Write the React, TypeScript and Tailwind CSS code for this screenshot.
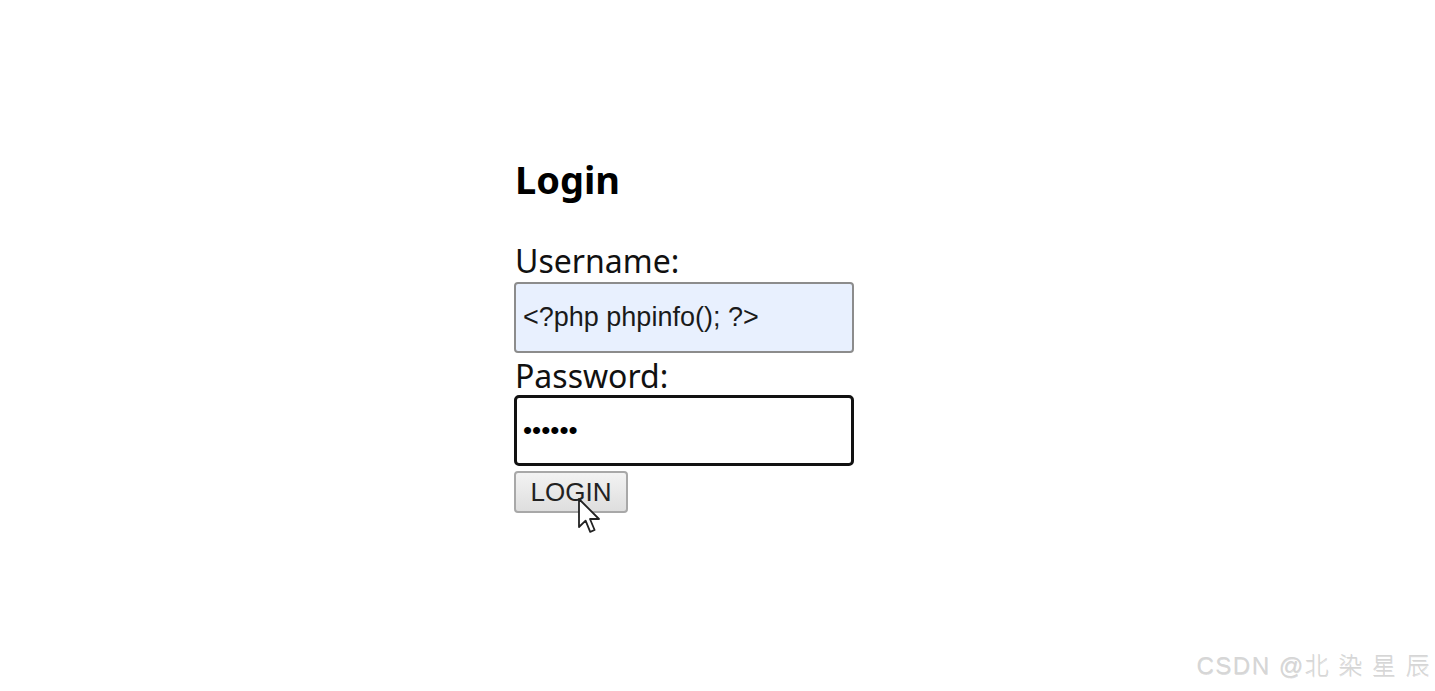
import React from "react";

export default function App() {
  return (
    <div className="relative w-[1435px] h-[691px] bg-white overflow-hidden" style={{ fontFamily: '"Noto Sans", "Open Sans", sans-serif' }}>
      <div className="flex flex-col items-start pl-[514px] pt-[156px]">
        <h1 className="text-[38px] leading-[46px] font-bold text-black pl-[1px]">Login</h1>
        <label className="mt-[41px] text-[32px] leading-[36px] text-[#111] pl-[1px]">Username:</label>
        <input
          readOnly
          value="<?php phpinfo(); ?>"
          className="mt-[3px] w-[340px] h-[71px] bg-[#e8f0fe] border-2 border-[#8c8c8c] rounded-[4px] px-[7px] text-[27px] text-[#1a1a1a] outline-none"
          style={{ fontFamily: '"Liberation Sans", Arial, sans-serif' }}
        />
        <label className="mt-[5px] text-[32px] leading-[36px] text-[#111] pl-[1px]">Password:</label>
        <input
          readOnly
          type="password"
          value="secret"
          className="mt-[1px] w-[340px] h-[71px] bg-white border-[3px] border-[#111] rounded-[5px] px-[6px] text-[26px] text-black outline-none"
          style={{ fontFamily: '"Liberation Sans", Arial, sans-serif' }}
        />
        <div className="relative mt-[5px]">
          <button
            className="w-[114px] h-[42px] border-2 border-[#a8a8a8] rounded-[4px] bg-gradient-to-b from-[#f3f3f3] to-[#dedede] text-[26px] text-[#222] leading-none"
            style={{ fontFamily: '"Liberation Sans", Arial, sans-serif' }}
          >
            LOGIN
          </button>
          <svg className="absolute left-[63px] top-[26px]" width="28" height="38" viewBox="0 0 14 19">
            <path
              d="M1 1 L1 15 L4.3 11.8 L6.6 17.4 L8.8 16.5 L6.5 11 L11 11 Z"
              fill="white"
              stroke="#222"
              strokeWidth="0.9"
              strokeLinejoin="round"
            />
          </svg>
        </div>
      </div>
      <div
        className="absolute right-[4px] top-[650px] text-[24px] leading-[32px] font-light tracking-[1.5px] text-[#d6d6d6] whitespace-nowrap"
        style={{ fontFamily: '"Liberation Sans", "Noto Sans CJK SC", sans-serif', textShadow: "0.5px 0.5px 0.5px rgba(0,0,0,0.12)" }}
      >
        CSDN @北 染 星 辰
      </div>
    </div>
  );
}
